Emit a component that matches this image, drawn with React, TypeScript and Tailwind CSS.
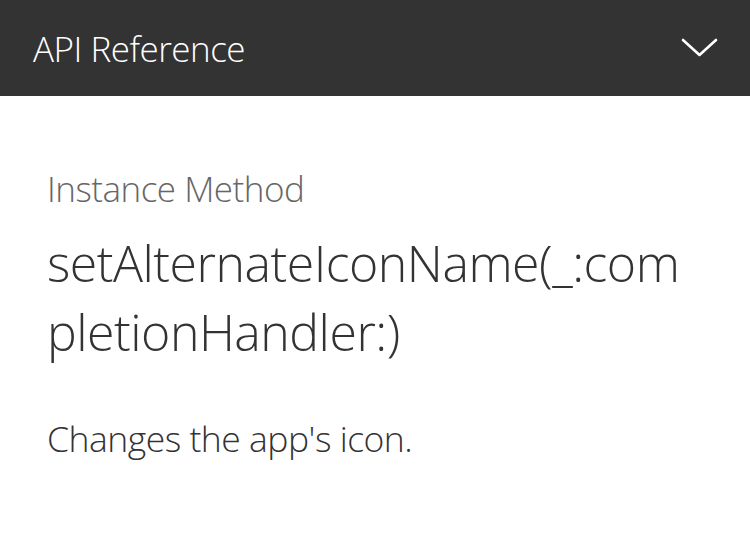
import React from "react";

export default function App() {
  return (
    <main
      className="w-[750px] h-[533px] bg-white overflow-hidden"
      style={{ fontFamily: '"Open Sans", "Noto Sans", sans-serif' }}
    >
      {/* top bar */}
      <header className="h-[96px] bg-[#333333] flex items-center justify-between pl-[33px] pr-[32px]">
        <h1 className="text-white text-[35px] font-light tracking-[-0.5px] leading-none">
          API Reference
        </h1>
        <svg width="37" height="20" viewBox="0 0 37 20" fill="none">
          <path
            d="M2 2 L18.5 17 L35 2"
            stroke="white"
            strokeWidth="2.6"
            strokeLinecap="round"
            strokeLinejoin="round"
          />
        </svg>
      </header>

      {/* content */}
      <section className="px-[47px] pt-[75px]">
        <p className="text-[#666666] text-[35px] font-light leading-none tracking-[-0.5px]">
          Instance Method
        </p>
        <h2 className="mt-[23px] w-[650px] text-[#333333] text-[50px] font-light leading-[69px] tracking-[-0.5px] break-all">
          setAlternateIconName(_:completionHandler:)
        </h2>
        <p className="mt-[54px] text-[#333333] text-[35.5px] font-light leading-none tracking-[-0.5px]">
          Changes the app's icon.
        </p>
      </section>
    </main>
  );
}
